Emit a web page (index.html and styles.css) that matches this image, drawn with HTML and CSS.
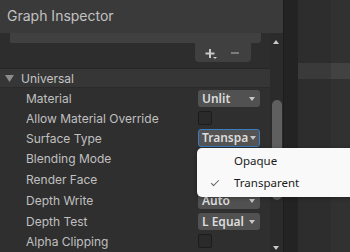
FILE: index.html
```html
<!DOCTYPE html>
<html lang="en">
<head>
    <meta charset="UTF-8">
    <title>Graph Inspector</title>
    <link rel="stylesheet" href="styles.css">
</head>
<body>
    <div class="window">
        <div class="inspector">
            <div class="title-bar">Graph Inspector</div>
            <div class="inspector-body">
                <div class="content">
                    <!-- bottom of the reorderable list -->
                    <div class="list-footer">
                        <div class="list-edge"></div>
                        <div class="list-buttons">
                            <svg class="btn-add" width="14" height="12" viewBox="0 0 14 12">
                                <path d="M5 1v9M0.5 5.5h9" stroke="#c8c8c8" stroke-width="2"/>
                                <path d="M8 9h4l-2 2z" fill="#c8c8c8"/>
                            </svg>
                            <svg class="btn-remove" width="9" height="4" viewBox="0 0 9 4">
                                <path d="M0 2h8" stroke="#7c7c7c" stroke-width="2"/>
                            </svg>
                        </div>
                    </div>

                    <div class="foldout">
                        <svg class="fold-arrow" width="9" height="7" viewBox="0 0 9 7"><path d="M0 0h9L4.5 7z" fill="#8c8c8c"/></svg>
                        <span>Universal</span>
                    </div>

                    <div class="props">
                        <div class="row">
                            <span class="label">Material</span>
                            <div class="dropdown">Unlit<i class="caret"></i></div>
                        </div>
                        <div class="row">
                            <span class="label">Allow Material Override</span>
                            <div class="checkbox"></div>
                        </div>
                        <div class="row">
                            <span class="label">Surface Type</span>
                            <div class="dropdown focused">Transpa<i class="caret"></i></div>
                        </div>
                        <div class="row tall">
                            <span class="label">Blending Mode</span>
                            <div class="dropdown">Alpha<i class="caret"></i></div>
                        </div>
                        <div class="row tall">
                            <span class="label">Render Face</span>
                            <div class="dropdown">Front<i class="caret"></i></div>
                        </div>
                        <div class="row tall">
                            <span class="label">Depth Write</span>
                            <div class="dropdown">Auto<i class="caret"></i></div>
                        </div>
                        <div class="row">
                            <span class="label">Depth Test</span>
                            <div class="dropdown">L Equal<i class="caret"></i></div>
                        </div>
                        <div class="row">
                            <span class="label">Alpha Clipping</span>
                            <div class="checkbox"></div>
                        </div>
                    </div>
                </div>

                <div class="scrollbar">
                    <i class="scroll-up"></i>
                    <div class="thumb"></div>
                    <i class="scroll-down"></i>
                </div>
            </div>
        </div>

        <div class="splitter"></div>

        <div class="graph">
            <div class="graph-band"></div>
        </div>

        <!-- open dropdown menu -->
        <div class="popup">
            <div class="menu-item">Opaque</div>
            <div class="menu-item checked">Transparent</div>
        </div>
    </div>
</body>
</html>
```

FILE: styles.css
```css
body {
    margin: 0;
    background-color: #2e2e2e;
    font-family: Inter, "Noto Sans", sans-serif;
    color: #c4c4c4;
}

.window {
    position: relative;
    display: flex;
    width: 350px;
    height: 252px;
    overflow: hidden;
}

.inspector {
    width: 283px;
    display: flex;
    flex-direction: column;
}

.title-bar {
    height: 33px;
    padding-left: 7px;
    line-height: 32px;
    font-size: 14px;
    color: #c2c2c2;
    background-color: #3a3a3a;
}

.inspector-body {
    flex: 1;
    display: flex;
}

.content {
    width: 270px;
    background-color: #2f2f2f;
}

.list-footer {
    height: 35px;
    padding-left: 10px;
    box-sizing: border-box;
    background-color: #2d2d2d;
}

.list-edge {
    width: 251px;
    height: 10px;
    background-color: #404040;
    border-radius: 0 0 3px 0;
}

.list-buttons {
    width: 56px;
    height: 19px;
    margin-left: 185px;
    display: flex;
    align-items: center;
    gap: 12px;
    padding-left: 10px;
    box-sizing: border-box;
    background-color: #404040;
    border-radius: 0 0 4px 4px;
}

.btn-add {
    margin-top: 2px;
}

.foldout {
    height: 20px;
    display: flex;
    align-items: center;
    gap: 7px;
    padding-left: 5px;
    font-size: 12px;
    background-color: #363636;
    border-top: 1px solid #262626;
    border-bottom: 1px solid #2a2a2a;
    box-sizing: border-box;
}

.row {
    height: 20px;
    display: flex;
    align-items: center;
    justify-content: space-between;
    padding-left: 26px;
    padding-right: 10px;
    font-size: 12px;
}

.row.tall {
    height: 21px;
}

.label {
    color: #c0c0c0;
}

.dropdown {
    position: relative;
    width: 62px;
    height: 17px;
    box-sizing: border-box;
    padding-left: 4px;
    line-height: 17px;
    font-family: "Noto Sans", sans-serif;
    font-size: 12px;
    font-weight: 600;
    color: #dcdcdc;
    background-color: #515151;
    border-radius: 3px;
    overflow: hidden;
    white-space: nowrap;
}

.dropdown.focused {
    height: 18px;
    line-height: 16px;
    padding-left: 3px;
    border: 1px solid #3b7dc0;
    background-color: #545454;
}

.caret {
    position: absolute;
    right: 5px;
    top: 7px;
    width: 0;
    height: 0;
    border-left: 3.5px solid transparent;
    border-right: 3.5px solid transparent;
    border-top: 4px solid #c8c8c8;
}

.dropdown.focused .caret {
    right: 3px;
    top: 6px;
    background-color: #545454;
}

.checkbox {
    width: 14px;
    height: 14px;
    margin-right: 48px;
    box-sizing: border-box;
    background-color: #2a2a2a;
    border: 1px solid #1c1c1c;
    border-radius: 2px;
}

.scrollbar {
    position: relative;
    width: 13px;
    background-color: #2b2b2b;
}

.scroll-up,
.scroll-down {
    position: absolute;
    left: 3px;
    width: 0;
    height: 0;
    border-left: 3.5px solid transparent;
    border-right: 3.5px solid transparent;
}

.scroll-up {
    top: 7px;
    border-bottom: 4px solid #c8c8c8;
}

.scroll-down {
    bottom: 2px;
    border-top: 4px solid #c8c8c8;
}

.thumb {
    position: absolute;
    left: 2px;
    top: 67px;
    width: 10px;
    height: 100px;
    border-radius: 5px;
    background-color: #5f5f5f;
}

.splitter {
    width: 15px;
    background-color: #232323;
    border-left: 1px solid #1d1d1d;
    box-sizing: border-box;
}

.graph {
    flex: 1;
    background: linear-gradient(to right, #2d2d2d 33px, #313131 33px);
}

.graph-band {
    height: 16px;
    margin-top: 63px;
    background: linear-gradient(to right, #3a3a3a 33px, #424242 33px);
}

.popup {
    position: absolute;
    left: 197px;
    top: 148px;
    width: 170px;
    height: 49px;
    padding-top: 2px;
    box-sizing: border-box;
    background-color: #f9f9f9;
    border-radius: 5px;
    box-shadow: 0 1px 4px rgba(0, 0, 0, 0.35);
}

.menu-item {
    position: relative;
    height: 22px;
    line-height: 22px;
    padding-left: 37px;
    font-family: "Noto Sans", sans-serif;
    font-size: 11.5px;
    color: #1b1b1b;
}

.menu-item.checked::before {
    content: "";
    position: absolute;
    left: 14px;
    top: 8px;
    width: 7px;
    height: 3px;
    border-left: 1px solid #606060;
    border-bottom: 1px solid #606060;
    transform: rotate(-45deg);
}
```
